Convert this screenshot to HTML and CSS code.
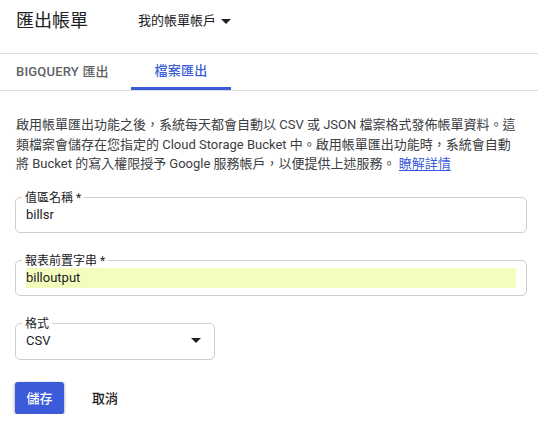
FILE: index.html
```html
<!DOCTYPE html>
<html lang="zh-Hant">
<head>
<meta charset="utf-8">
<title>匯出帳單</title>
<link rel="stylesheet" href="styles.css">
</head>
<body>
<header class="header">
  <h1 class="title">匯出帳單</h1>
  <button class="account">
    <span>我的帳單帳戶</span>
    <svg class="caret" width="10" height="5" viewBox="0 0 10 5"><path d="M0 0H10L5 5Z" fill="#202124"/></svg>
  </button>
</header>
<nav class="tabs">
  <div class="tab">BIGQUERY 匯出</div>
  <div class="tab active">檔案匯出</div>
</nav>
<main class="content">
  <p class="desc">啟用帳單匯出功能之後，系統每天都會自動以 CSV 或 JSON 檔案格式發佈帳單資料。這類檔案會儲存在您指定的 Cloud Storage Bucket 中。啟用帳單匯出功能時，系統會自動將 Bucket 的寫入權限授予 Google 服務帳戶，以便提供上述服務。 <a class="link" href="#">瞭解詳情</a></p>
  <fieldset class="field">
    <legend class="label">值區名稱 *</legend>
    <div class="value">billsr</div>
  </fieldset>
  <fieldset class="field">
    <legend class="label">報表前置字串 *</legend>
    <div class="value autofill">billoutput</div>
  </fieldset>
  <fieldset class="field select">
    <legend class="label">格式</legend>
    <div class="value select-value">
      <span>CSV</span>
      <svg class="caret" width="10" height="5" viewBox="0 0 10 5"><path d="M0 0H10L5 5Z" fill="#202124"/></svg>
    </div>
  </fieldset>
  <div class="actions">
    <button class="btn primary">儲存</button>
    <button class="btn flat">取消</button>
  </div>
</main>
</body>
</html>
```
FILE: styles.css
```css
* { box-sizing: border-box; }
html, body { margin: 0; padding: 0; background: #fff; }
body {
  font-family: Roboto, "Noto Sans CJK TC", sans-serif;
  color: #202124;
  width: 538px;
}
.header {
  height: 54px;
  display: flex;
  align-items: flex-start;
  padding: 9px 16px 0;
  border-bottom: 1px solid #dadce0;
}
.title {
  margin: 0;
  font-size: 18px;
  font-weight: 400;
  line-height: 24px;
  color: #202124;
}
.account {
  margin-left: 50px;
  border: 0;
  background: none;
  padding: 0;
  font: inherit;
  font-size: 13px;
  line-height: 24px;
  color: #202124;
  display: flex;
  align-items: center;
  gap: 5px;
}
.tabs {
  display: flex;
  height: 37px;
  border-bottom: 1px solid #dadce0;
  padding-left: 16px;
}
.tab {
  font-size: 13px;
  font-weight: 500;
  color: #5f6368;
  line-height: 36px;
  letter-spacing: 0.2px;
}
.tab:first-child { width: 115px; }
.tab.active {
  width: 100px;
  text-align: center;
  color: #3c5fd9;
  border-bottom: 3px solid #3b5bdb;
  line-height: 34px;
}
.content { padding: 24px 11px 0 15px; }
.desc {
  margin: 0 5px 17px 1px;
  font-size: 13px;
  line-height: 19.5px;
  color: #3c4043;
}
.link { color: #3b5bdb; text-decoration: underline; text-underline-offset: 2px; }
.field {
  margin: 0 0 21px;
  padding: 0 10px 7px;
  border: 1px solid #cfcfcf;
  border-radius: 5px;
  min-width: 0;
}
.label {
  font-size: 12px;
  line-height: 14px;
  padding: 0 3px;
  margin-left: -4px;
  color: #202124;
}
.value {
  font-size: 13px;
  line-height: 20px;
  color: #202124;
}
.autofill { background: #f5fdbe; }
.select { width: 200px; padding-bottom: 8px; }
.select-value {
  display: flex;
  justify-content: space-between;
  align-items: center;
  padding-right: 3px;
}
.actions {
  display: flex;
  align-items: center;
  gap: 16px;
  margin-top: 22px;
}
.btn {
  font: inherit;
  font-size: 13px;
  font-weight: 500;
  height: 32px;
  border: 0;
  border-radius: 3px;
  padding: 0 11px;
  cursor: pointer;
}
.primary {
  background: #3b5bdb;
  color: #fff;
  width: 49px;
  box-shadow: 0 1px 2px rgba(0,0,0,0.3), 0 1px 3px 1px rgba(0,0,0,0.15);
}
.flat { background: none; color: #202124; padding: 0 12px; }
```
